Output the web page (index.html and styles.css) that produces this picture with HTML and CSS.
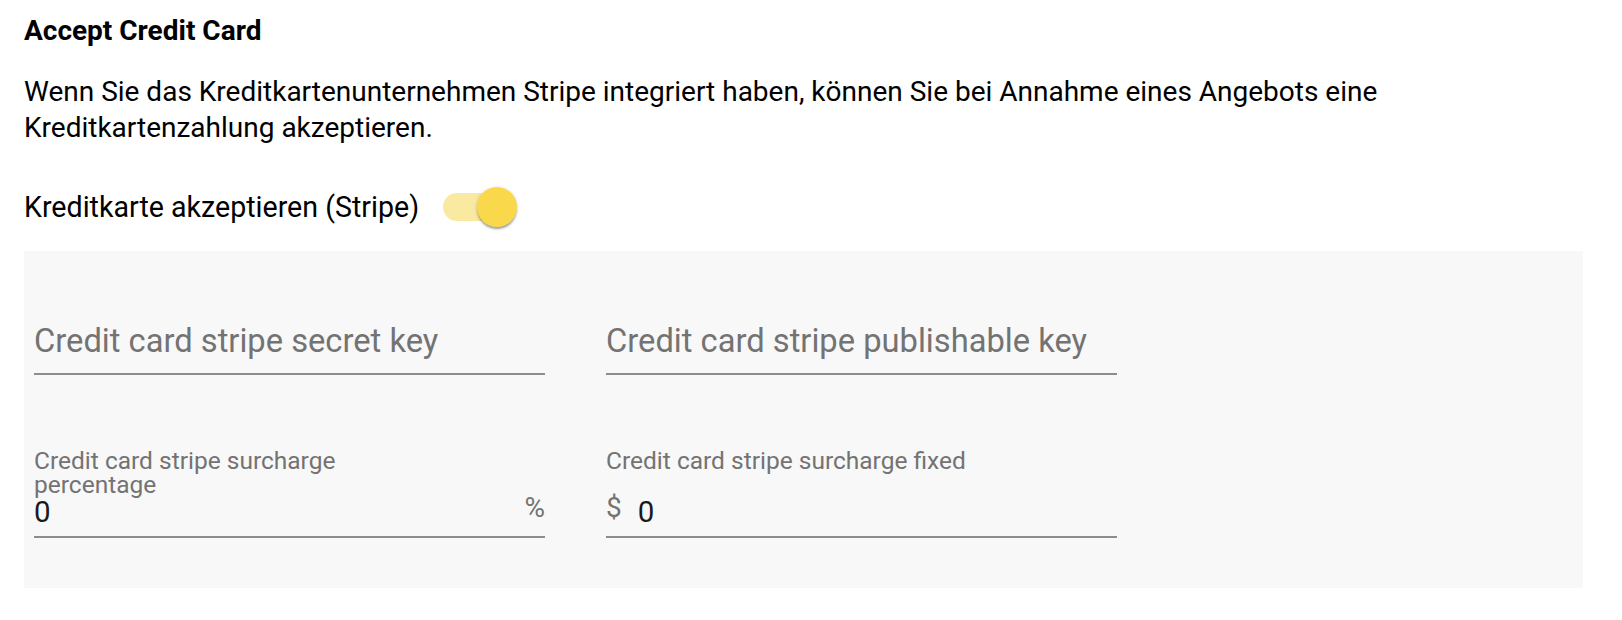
FILE: index.html
```html
<!DOCTYPE html>
<html lang="de">
<head>
    <meta charset="UTF-8">
    <meta name="viewport" content="width=device-width, initial-scale=1.0">
    <title>Accept Credit Card</title>
    <link rel="stylesheet" href="styles.css">
</head>
<body>
    <section class="settings">
        <h2 class="section-title">Accept Credit Card</h2>
        <p class="section-text">Wenn Sie das Kreditkartenunternehmen Stripe integriert haben, können Sie bei Annahme eines Angebots eine Kreditkartenzahlung akzeptieren.</p>

        <div class="toggle-row">
            <label class="toggle-label" for="acceptStripe">Kreditkarte akzeptieren (Stripe)</label>
            <span class="toggle is-on" id="acceptStripe" role="switch" aria-checked="true">
                <span class="toggle-track"></span>
                <span class="toggle-thumb"></span>
            </span>
        </div>

        <div class="stripe-panel">
            <div class="field">
                <input class="field-input field-input-big" type="text" placeholder="Credit card stripe secret key">
            </div>
            <div class="field">
                <input class="field-input field-input-big" type="text" placeholder="Credit card stripe publishable key">
            </div>

            <div class="field">
                <label class="field-label field-label-narrow">Credit card stripe surcharge percentage</label>
                <div class="field-row">
                    <input class="field-input" type="text" value="0">
                    <span class="field-suffix">%</span>
                </div>
            </div>
            <div class="field">
                <label class="field-label">Credit card stripe surcharge fixed</label>
                <div class="field-row">
                    <span class="field-prefix">$</span>
                    <input class="field-input" type="text" value="0">
                </div>
            </div>
        </div>
    </section>
</body>
</html>
```

FILE: styles.css
```css
body {
    margin: 0;
    padding: 0 39px 0 24px;
    font-family: Roboto, "Liberation Sans", Arial, sans-serif;
    color: rgba(0, 0, 0, 0.87);
    background: #fff;
}
.section-title {
    margin: 13px 0 0;
    font-size: 28px;
    line-height: 36px;
    font-weight: 700;
    color: #000;
}
.section-text {
    margin: 25px 0 0;
    font-size: 28px;
    line-height: 36px;
    color: #000;
}
.toggle-row {
    display: flex;
    align-items: center;
    height: 40px;
    margin-top: 41px;
}
.toggle-label {
    font-size: 28.6px;
    line-height: 36px;
    color: #000;
}
.toggle {
    position: relative;
    display: inline-block;
    width: 74px;
    height: 40px;
    margin-left: 24px;
}
.toggle-track {
    position: absolute;
    left: 0;
    top: 6px;
    width: 68px;
    height: 28px;
    border-radius: 14px;
    background: #fae9a0;
}
.toggle-thumb {
    position: absolute;
    right: 0;
    top: 0;
    width: 40px;
    height: 40px;
    border-radius: 50%;
    background: #f9d94b;
    box-shadow: 0 3px 2px -1px rgba(0, 0, 0, 0.2), 0 2px 2px 0 rgba(0, 0, 0, 0.14), 0 1px 5px 0 rgba(0, 0, 0, 0.12);
}
.stripe-panel {
    display: grid;
    grid-template-columns: 511px 511px;
    column-gap: 61px;
    row-gap: 74px;
    align-items: end;
    margin-top: 24px;
    padding: 71px 0 50px 10px;
    background: #f8f8f8;
}
.field {
    display: flex;
    flex-direction: column;
    border-bottom: 2px solid #8d8d8d;
}
.field-label {
    height: 46px;
    font-size: 24.5px;
    line-height: 24px;
    color: #737373;
}
.field-label-narrow {
    max-width: 340px;
}
.field-row {
    display: flex;
    align-items: center;
    height: 33px;
    padding-bottom: 8px;
}
.field-input {
    flex: 1;
    min-width: 0;
    width: 100%;
    height: 33px;
    padding: 0;
    border: 0;
    outline: none;
    background: transparent;
    font-family: inherit;
    font-size: 29.5px;
    color: #1a1a1a;
}
.field-input-big {
    flex: none;
    height: 37px;
    margin-bottom: 14px;
    font-size: 32.7px;
}
.field-input-big::placeholder {
    color: #737373;
}
.field-prefix,
.field-suffix {
    font-size: 28px;
    color: #737373;
    margin-top: -8px;
}
.field-prefix {
    margin-right: 16px;
}
```
